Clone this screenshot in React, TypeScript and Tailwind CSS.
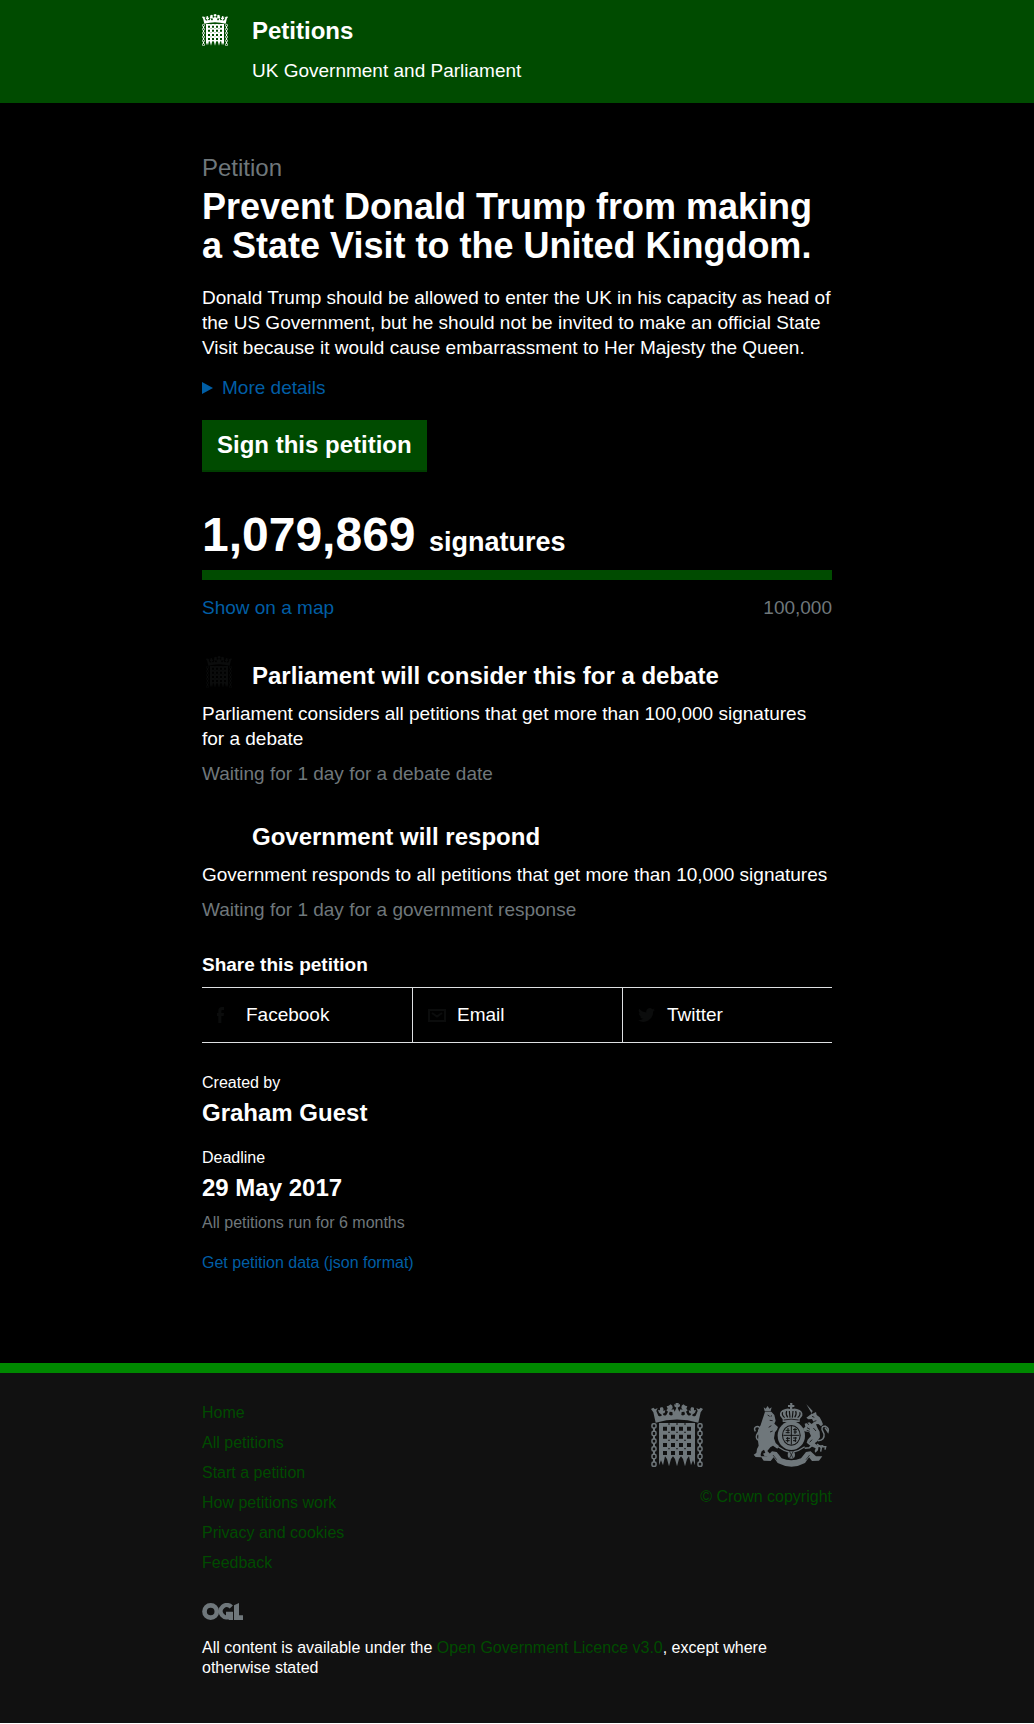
import React from "react";

type IconProps = { className?: string };

const gateColumns = [69, 93, 117, 141];
const gateRows = [95, 119, 144, 168];
const chainLinks = [84, 107, 130, 153, 176, 199];

const gatePath =
  "M57 84H165V211L159 196L153 211L147 184L141 192L135 214L129 192L123 184L117 192L111 214L105 192L99 184L93 192L87 214L81 192L75 184L69 211L63 196L57 211Z" +
  gateRows.map((y) => gateColumns.map((x) => `M${x} ${y}h12v12h-12z`).join("")).join("") +
  [85, 110, 134, 159].map((y) => [85, 109, 133].map((x) => `M${x} ${y}h4v4h-4z`).join("")).join("");

function Portcullis({ className }: IconProps) {
  return (
    <svg viewBox="33 24 156 192" className={className} fill="currentColor" aria-hidden="true">
      <path
        fillRule="evenodd"
        d="M47 83L40 52L33 42L40 38L45 43L53 39L49 48L55 62Q62 66 66 60L57 53L54 45L60 46L60 38L67 36L71 42L69 47L76 46L74 54L68 56Q72 65 79 60L84 50L79 46L83 41L80 34L86 32L92 28L97 32L98 39L94 44L101 43L104 50L109 38L103 34L103 27L107 29V24H116V29L120 27V34L113 38L118 50L121 43L128 44L124 39L125 32L130 28L136 32L142 34L139 41L143 46L138 50L143 60Q150 65 154 56L148 54L146 46L153 47L151 42L155 36L162 38L162 46L168 45L165 53L156 60Q160 66 167 62L173 48L169 39L177 43L182 38L189 42L182 52L175 83Q111 64 47 83ZM87 58Q91 63 98 60L97 51L89 50ZM124 60Q131 63 135 58L133 50L125 51Z"
      />
      <path fillRule="evenodd" d={gatePath} />
      <g fill="none" stroke="currentColor" strokeWidth="4.5">
        {chainLinks.map((y) => (
          <g key={y}>
            <rect x="36" y={y + 2} width="12" height="13" rx="4" />
            <rect x="174" y={y + 2} width="12" height="13" rx="4" />
          </g>
        ))}
        {chainLinks.slice(0, 5).map((y) => (
          <path key={y} strokeWidth="6" d={`M42 ${y + 14}v12M180 ${y + 14}v12`} />
        ))}
      </g>
    </svg>
  );
}

function RoyalArms({ className }: IconProps) {
  return (
    <svg viewBox="38 24 234 192" className={className} fill="currentColor" aria-hidden="true">
      {/* Crown */}
      <path d="M149 24h7v6h6v6h-6v6q6-3 14 0q19 5 16 20l-8 11v8h-51v-8l-8-11q-3-15 16-20q8-3 14 0v-6h-6v-6h7z" />
      <g fill="none" stroke="#111" strokeWidth="3.5">
        <path d="M127 52q-4 8 6 16M139 48q-4 10 3 19M147 48l2 20M158 48l-2 20M166 48q4 10-3 19M178 52q4 8-6 16" />
        <path d="M130 75q22-5 45 0" strokeWidth="2.5" />
      </g>
      {/* Garter and shield */}
      <ellipse cx="153" cy="122" rx="41" ry="43" />
      <ellipse cx="153" cy="121" rx="28" ry="31" fill="#111" />
      <ellipse cx="153" cy="121" rx="25" ry="28" />
      <path d="M153 93v56M129 121h48M136 106h12M136 113h12M158 104h12M160 111h10M137 130h12M136 137h12M158 129h12M158 137h10M143 99v16M164 99v18M142 126v16M165 126v15" stroke="#111" strokeWidth="3" />
      {/* Lion */}
      <path d="M70 37l6 4 6-8 5 8 7-4-3 12h-18zM74 50h19l9 10 4 17-4 9 11 10-3 8-6 8-3 18 5 14 10 9-5 8-13-9-8 5-9 11 8 8 2 9-18-1-5-8 7-3-4-9-7 5-3 9 1 9-16-1-6-7 8-5 2-12 5-10-2-14 1-14-1-18 8-16z" />
      <path d="M82 60l6 4M91 64l4-2M88 76l9 1M93 92l-8 5M97 108l-8 3" stroke="#111" strokeWidth="2.5" />
      <path d="M61 138q-17-4-12-18l8-14q4-13-9-11q-9 4-3 14M59 103l-7 16" fill="none" stroke="currentColor" strokeWidth="4.5" />
      {/* Unicorn */}
      <path d="M198 28l17 29 12-6 2 9 9 7 6 11 4 10-6 6-8-7-7 1 5 12 6 10 1 17-8 12-8 6 12 9-2 12-8 7-2-5 3-8-15-7-12-10 3-9 10-11-5-11-15-3-4-8 7-6-2-9 14-4 7 5 6-5-5-10-11 1-6-5 14-10 5-10z" />
      <path d="M200 98l9 5M199 106l9 3M215 64l7 3M219 80l9-3M219 99l8 9M215 134l-7 8M199 84l7 5" stroke="#111" strokeWidth="2.5" />
      <path d="M233 137q21-2 18-20l-6-13q-1-13 11-10q11 5 7 17l-9-13M223 145l-16 13-14 2M230 147l13 11-2 12M232 154l17-2M245 155h11l-2 9" fill="none" stroke="currentColor" strokeWidth="4.5" />
      {/* Motto scroll */}
      <path d="M61 184h19l15-15 14 2 15 19q29 12 58 0l15-19 14-2 16 15h19l-10 13-21 1-9-11-12 17q-40 22-82 0l-12-17-9 11-21-1z" />
      <path d="M98 180l11 14M208 180l-11 14" fill="none" stroke="#111" strokeWidth="2" />
      <path d="M113 155q18 13 34 16M193 155q-18 13-34 16" fill="none" stroke="currentColor" strokeWidth="4" />
      <circle cx="153" cy="180" r="11" />
      <path d="M148 170l10 19M158 170l-10 19" stroke="#111" strokeWidth="2" />
    </svg>
  );
}

function OglLogo() {
  return (
    <svg viewBox="0 0 123 51" className="h-[17px] w-[41px] text-[#6f777b]" aria-label="OGL">
      <circle cx="26" cy="25.5" r="18.5" fill="none" stroke="currentColor" strokeWidth="14" />
      <path d="M88 12A18.5 18.5 0 1 0 86 39V33H72" fill="none" stroke="currentColor" strokeWidth="13" />
      <path d="M80 27h13v24H80zM96 7L111 0v37h12v14H96z" fill="currentColor" />
    </svg>
  );
}

function FacebookIcon() {
  return (
    <svg viewBox="0 0 21 48" className="ml-[15px] mr-[22px] h-4 w-[7px]" fill="#0b0c0c">
      <path d="M21 0v9h-5q-3 0-3 3v6h8l-1 9h-7v21H4V27H0v-9h4v-7Q4 0 15 0z" />
    </svg>
  );
}

function EmailIcon() {
  return (
    <svg viewBox="0 0 18 13" className="ml-[15px] mr-[11px] h-[13px] w-[18px]" fill="none" stroke="#0b0c0c" strokeWidth="2">
      <path d="M1 1h16v11H1zM4 4l5 3.5L14 4" />
    </svg>
  );
}

function TwitterIcon() {
  return (
    <svg viewBox="0 2 24 20" className="ml-[15px] mr-[12px] h-[14px] w-[17px]" fill="#0b0c0c">
      <path d="M24 4.6a10 10 0 0 1-2.8.8 5 5 0 0 0 2.1-2.7 10 10 0 0 1-3.1 1.2 4.9 4.9 0 0 0-8.4 4.5A14 14 0 0 1 1.7 3.1a4.9 4.9 0 0 0 1.5 6.6 5 5 0 0 1-2.2-.6 4.9 4.9 0 0 0 3.9 4.9 5 5 0 0 1-2.2.1 4.9 4.9 0 0 0 4.6 3.4A10 10 0 0 1 0 19.5 14 14 0 0 0 21.5 7.1 10 10 0 0 0 24 4.6z" />
    </svg>
  );
}

const footerLinks = [
  "Home",
  "All petitions",
  "Start a petition",
  "How petitions work",
  "Privacy and cookies",
  "Feedback",
];

const shareLinks = [
  { label: "Facebook", icon: <FacebookIcon />, cell: "w-[210px]" },
  { label: "Email", icon: <EmailIcon />, cell: "w-[210px] border-l border-[#dee0e2]" },
  { label: "Twitter", icon: <TwitterIcon />, cell: "w-[210px] border-l border-[#dee0e2]" },
];

export default function App() {
  return (
    <div className="flex h-[1723px] flex-col bg-black font-['Liberation_Sans',Arial,sans-serif] text-[19px] leading-[25px] text-white">
      <header className="h-[103px] bg-[#004b00]">
        <div className="mx-auto flex w-[630px]">
          <Portcullis className="mt-[14px] h-8 w-[26px]" />
          <div className="ml-6 pt-4">
            <a className="block text-[24px] font-bold leading-[30px]">Petitions</a>
            <p className="mt-3">UK Government and Parliament</p>
          </div>
        </div>
      </header>

      <main className="mx-auto h-[1260px] w-[630px] pt-[50px]">
        <h1 className="text-[36px] font-bold leading-[39px]">
          <span className="mb-1 block text-[24px] font-normal leading-[30px] text-[#6f777b]">Petition</span>
          Prevent Donald Trump from making a State Visit to the United Kingdom.
        </h1>
        <p className="mt-5">
          Donald Trump should be allowed to enter the UK in his capacity as head of the US Government, but he should not
          be invited to make an official State Visit because it would cause embarrassment to Her Majesty the Queen.
        </p>
        <div className="mt-[15px] flex items-center text-[#005ea5]">
          <svg viewBox="0 0 10 12" preserveAspectRatio="none" className="mr-[9px] h-3 w-[11px]" fill="currentColor">
            <path d="M0 0l10 6-10 6z" />
          </svg>
          More details
        </div>
        <a className="mt-5 block h-[52px] w-[225px] border-b-2 border-[#003d00] bg-[#004b00] pl-[15px] pt-[10px] text-[24px] font-bold leading-[30px]">
          Sign this petition
        </a>

        <section>
          <p className="mt-[38px] h-[50px] text-[48px] font-bold leading-[50px]">
            1,079,869 <span className="text-[27px] leading-none">signatures</span>
          </p>
          <div className="mt-[10px] h-[10px] bg-[#004b00]" />
          <div className="mt-[15px] flex justify-between">
            <a className="text-[#005ea5]">Show on a map</a>
            <span className="text-[#6f777b]">100,000</span>
          </div>
        </section>

        <section className="mt-[35px]">
          <div className="flex h-[35px] items-start">
            <Portcullis className="ml-1 mt-px h-8 w-[26px] text-[#0b0c0c]" />
            <h2 className="ml-5 mt-[6px] text-[24px] font-bold leading-[30px]">
              Parliament will consider this for a debate
            </h2>
          </div>
          <p className="mt-[11px]">Parliament considers all petitions that get more than 100,000 signatures for a debate</p>
          <p className="mt-[10px] text-[#6f777b]">Waiting for 1 day for a debate date</p>
        </section>

        <section className="mt-9">
          <h2 className="pl-[50px] text-[24px] font-bold leading-[30px]">Government will respond</h2>
          <p className="mt-[10px]">Government responds to all petitions that get more than 10,000 signatures</p>
          <p className="mt-[10px] text-[#6f777b]">Waiting for 1 day for a government response</p>
        </section>

        <section className="mt-[30px]">
          <h2 className="font-bold">Share this petition</h2>
          <div className="mt-[10px] flex h-14 border-y border-[#dee0e2]">
            {shareLinks.map(({ label, icon, cell }) => (
              <a key={label} className={`flex items-center ${cell}`}>
                {icon}
                <span className="pb-0.5">{label}</span>
              </a>
            ))}
          </div>
        </section>

        <section className="mt-[30px] text-[16px] leading-5">
          <p>Created by</p>
          <p className="mt-[5px] text-[24px] font-bold leading-[30px]">Graham Guest</p>
          <p className="mt-5">Deadline</p>
          <p className="mt-[5px] text-[24px] font-bold leading-[30px]">29 May 2017</p>
          <p className="mt-[10px] text-[#6f777b]">All petitions run for 6 months</p>
          <a className="mt-5 block text-[#005ea5]">Get petition data (json format)</a>
        </section>
      </main>

      <footer className="flex-1 border-t-[10px] border-[#008800] bg-[#111111] pt-[30px] text-[16px] leading-5">
        <div className="mx-auto w-[630px]">
          <div className="flex justify-between text-[#004b00]">
            <nav className="flex flex-col gap-[10px]">
              {footerLinks.map((label) => (
                <a key={label}>{label}</a>
              ))}
            </nav>
            <div className="flex flex-col items-end">
              <div className="flex gap-[50px] pr-[1px] text-[#6f777b]">
                <Portcullis className="h-16 w-[52px]" />
                <RoyalArms className="h-16 w-[78px]" />
              </div>
              <a className="mt-5">© Crown copyright</a>
            </div>
          </div>
          <div className="mt-[30px]">
            <OglLogo />
          </div>
          <p className="mt-[18px]">
            All content is available under the <a className="text-[#004b00]">Open Government Licence v3.0</a>, except where
            otherwise stated
          </p>
        </div>
      </footer>
    </div>
  );
}
